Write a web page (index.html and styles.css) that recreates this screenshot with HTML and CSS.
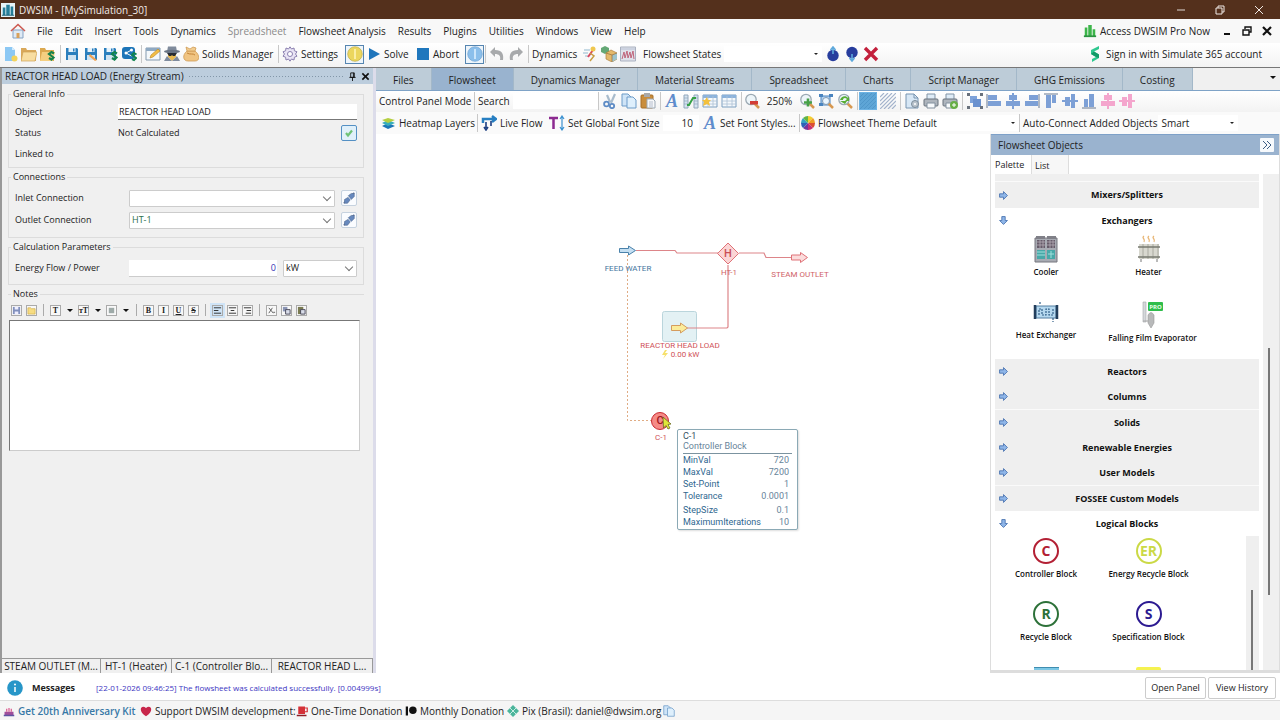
FILE: index.html
```html
<!DOCTYPE html>
<html lang="en">
<head>
<meta charset="utf-8">
<title>DWSIM - [MySimulation_30]</title>
<link rel="stylesheet" href="styles.css">
</head>
<body>
<svg class="sprite" aria-hidden="true">
  <symbol id="new" viewBox="0 0 16 16"><path d="M3 1h7l3 3v11H3z" fill="#8cc8f4"/><path d="M10 1v3h3" fill="#d4ecfc"/><circle cx="12.500" cy="12.500" r="3" fill="#f4d35a"/></symbol>
  <symbol id="open" viewBox="0 0 16 16"><path d="M0 2h5l1 2h9v11H0z" fill="#d9a85a"/><path d="M2 6h14l-2 9H0z" fill="#f8dda0" stroke="#cfa255" stroke-width=".7"/></symbol>
  <symbol id="dollar" viewBox="0 0 16 16"><path d="M12 0v3L7 5.500l5 3V12l-7 4v-3l4-2-5-3V4z" fill="#2fc890"/><path d="m4 8 5 3 3 1V8.500l-5-3z" fill="#139a68"/></symbol>
  <symbol id="opens" viewBox="0 0 16 16"><path d="M0 2h5l1 2h8v11H0z" fill="#dca950"/><path d="M2 6h13l-2 9H0z" fill="#f5cf80"/><path d="M14 7.500 11.500 6 9 8l4.500 3.500-2 2L9 12" fill="none" stroke="#14824c" stroke-width="2.200"/></symbol>
  <symbol id="save" viewBox="0 0 16 16"><path d="M2 2h11l1 1v11H2z" fill="#2b7fbd"/><path d="M4.500 2h7v4h-7z" fill="#e8f3fa"/><path d="M4 9h8v5H4z" fill="#cfe2f0"/><path d="M9 2.500h1.500v3H9z" fill="#2b7fbd"/></symbol>
  <symbol id="saveas" viewBox="0 0 16 16"><use href="#save"/><path d="m7 8 7 6-2 1-6-5z" fill="#f0a04c"/></symbol>
  <symbol id="saves" viewBox="0 0 16 16"><use href="#save"/><path d="M15 7.500 12.500 6 10 8l4.500 3.500-2 2L10 12" fill="none" stroke="#11844f" stroke-width="2.200"/></symbol>
  <symbol id="share" viewBox="0 0 16 16"><rect x="1" y="1" width="13" height="12" rx="3" fill="#1c75b8"/><path d="M10.500 4 5 7l5.500 3" fill="none" stroke="#fff" stroke-width="1"/><circle cx="10.500" cy="4" r="1.500" fill="#fff"/><circle cx="5" cy="7" r="1.500" fill="#fff"/><path d="M15.500 8.500 13 7l-2 2 4 3-2 2-2-1" fill="none" stroke="#11844f" stroke-width="2"/></symbol>
  <symbol id="edit" viewBox="0 0 16 16"><path d="M1 2h14v12H1z" fill="#f4f8fb" stroke="#8399ae"/><path d="M1 2h14v3H1z" fill="#8fa9c2"/><path d="m5 12 1-3 7-6 2 2-7 6z" fill="#f2bd45" stroke="#ba8420" stroke-width=".6"/></symbol>
  <symbol id="spy" viewBox="0 0 16 16"><path d="M4 .5h8l1 5H3z" fill="#808b9c"/><ellipse cx="8" cy="5.500" rx="8" ry="1.700" fill="#697484"/><path d="M4 7h8v4l-4 4-4-4z" fill="#e8b94f"/><path d="M3 7h10l-2 3H9L8 9l-1 1H5z" fill="#272c34"/><path d="m0 15 3-5 5 5 5-5 3 5z" fill="#7f8b9e"/></symbol>
  <symbol id="bag" viewBox="0 0 16 16"><path d="M4 5C-1 9 0 15 5 15h7c5 0 5-6 0-10z" fill="#f0c482" stroke="#cf9c55" stroke-width=".8"/><path d="M4 5 3 1l4 2 3-2 3 1-1 3z" fill="#f2cd90" stroke="#cf9c55" stroke-width=".8"/><path d="M4 7c3 2 6 0 8 2" fill="none" stroke="#c58438"/></symbol>
  <symbol id="gear" viewBox="0 0 16 16"><path d="m8 .8 1.500 2.200L12 2l.4 2.800 2.600 1L13.500 8l1.500 2.200-2.600 1L12 14l-2.500-1L8 15.200 6.500 13 4 14l-.4-2.800-2.600-1L2.500 8 1 5.800l2.600-1L4 2l2.500 1z" fill="#e9e4f5" stroke="#8b80b0"/><circle cx="8" cy="8" r="2.500" fill="#fff" stroke="#8b80b0"/></symbol>
  <symbol id="sol" viewBox="0 0 16 16"><circle cx="8" cy="8" r="7.300" fill="#ebd65d" stroke="#bdae48" stroke-width=".7"/><path d="M8 3v10" stroke="#fff6bc" stroke-width="1.500"/></symbol>
  <symbol id="inf" viewBox="0 0 16 16"><circle cx="8" cy="8" r="7.300" fill="#8bbfeb" stroke="#72a5d2" stroke-width=".7"/><path d="M8 3v10" stroke="#e0f2ff" stroke-width="1.500"/></symbol>
  <symbol id="play" viewBox="0 0 16 16"><path d="m3 2 11 6-11 6z" fill="#1f75bb"/></symbol>
  <symbol id="stop" viewBox="0 0 16 16"><path d="M2 2h12v12H2z" fill="#1f77bd"/></symbol>
  <symbol id="undo" viewBox="0 0 16 16"><path d="m1 6 5-5v3c7 0 9 4 8 10h-3c1-4-1-6-5-6v3z" fill="#a8aaac"/></symbol>
  <symbol id="redo" viewBox="0 0 16 16"><path d="m15 6-5-5v3C3 4 1 8 2 14h3C4 10 6 8 10 8v3z" fill="#a8aaac"/></symbol>
  <symbol id="tune" viewBox="0 0 16 16"><path d="M2 4h6M1 7h5M3 10h4" stroke="#91b8cf"/><path d="m6 11 5-7" stroke="#d94862" stroke-width="2"/><circle cx="11" cy="3" r="2.500" fill="#efc74f"/><path d="m8 7 4 3-4 5" fill="none" stroke="#c79d42" stroke-width="1.500"/></symbol>
  <symbol id="cubes" viewBox="0 0 16 16"><path d="m0 2 4-2 4 2v4L4 8 0 6z" fill="#64a876"/><path d="m5 7 5-3 6 3v6l-5 3-6-3z" fill="#e4b96a" stroke="#ad813d" stroke-width=".7"/><path d="m11 9 5-2v6l-5 3z" fill="#9dc4cc"/><path d="m5 7 6 2v7M11 9l5-2" fill="none" stroke="#9d7744" stroke-width=".8"/></symbol>
  <symbol id="chart" viewBox="0 0 16 16"><path d="M.5 1h15v14H.5z" fill="#dfe2ea" stroke="#aab1c0"/><path d="M2 13 4 6l1 6 2-7 1 7 2-6 1 6 2-7 1 8" fill="none" stroke="#c0647a"/><path d="M1 3h14" stroke="#b9c2d6"/></symbol>
  <symbol id="up" viewBox="0 0 16 16"><circle cx="8" cy="9.500" r="5.700" fill="#273d9d"/><path d="M8 8V1M5.500 4 8 1l2.500 3" fill="none" stroke="#5ea9dc" stroke-width="1.600"/></symbol>
  <symbol id="down" viewBox="0 0 16 16"><circle cx="8" cy="6.500" r="5.700" fill="#273d9d"/><path d="M8 8v7M5.500 12 8 15l2.500-3" fill="none" stroke="#5ea9dc" stroke-width="1.600"/></symbol>
  <symbol id="del" viewBox="0 0 16 16"><path d="m2 2 12 12M14 2 2 14" stroke="#c3203c" stroke-width="3.400"/></symbol>
  <symbol id="cut" viewBox="0 0 16 16"><path d="m9 10 4-9M8 9 5 2" stroke="#a9bccd" stroke-width="2.200"/><circle cx="4.500" cy="11" r="2.400" fill="none" stroke="#5d8bc5" stroke-width="1.800"/><circle cx="10" cy="13" r="2.200" fill="none" stroke="#5d8bc5" stroke-width="1.800"/></symbol>
  <symbol id="copy" viewBox="0 0 16 16"><path d="M1 1h6l3 3v9H1z" fill="#cfe4f7" stroke="#6c9bc8"/><path d="M6 4h6l3 3v8H6z" fill="#deeffc" stroke="#6c9bc8"/></symbol>
  <symbol id="paste" viewBox="0 0 16 16"><rect x="1" y="2" width="12" height="13" rx="1" fill="#c98d3c" stroke="#a76e26"/><path d="M4 0h6v4H4z" fill="#a9a9a9"/><path d="M7 6h6l2 2v7H7z" fill="#f7f8fa" stroke="#9ba8b5"/><path d="M9 9h4M9 11h4M9 13h4" stroke="#99a8ba" stroke-width=".7"/></symbol>
  <symbol id="conn" viewBox="0 0 16 16"><path d="M1 2h4v13H1zM11 2h4v13h-4z" fill="#d5e3f0" stroke="#92a7bb"/><path d="M1 5h4M1 8h4M1 11h4M11 5h4M11 8h4M11 11h4" stroke="#92a7bb" stroke-width=".7"/><path d="M4 12h2l4-7h3" fill="none" stroke="#35a047" stroke-width="2"/></symbol>
  <symbol id="tbl" viewBox="0 0 16 16"><path d="M1 2h14v12H1z" fill="#f5f9fc" stroke="#7d9fc0"/><path d="M1 2h14v3H1z" fill="#8cb3dc"/><path d="M1 8h14M1 11h14M6 3v11M11 3v11" stroke="#adc2d6" stroke-width=".8"/></symbol>
  <symbol id="tbl2" viewBox="0 0 16 16"><use href="#tbl"/><path d="m5 4 1 3h3L7 9l1 4-3-2-4 2 1-4-2-2h3z" fill="#f3c03c"/></symbol>
  <symbol id="lens" viewBox="0 0 16 16"><path d="m10 10 5 5" stroke="#d79850" stroke-width="2.500"/><circle cx="7" cy="6.500" r="5.200" fill="#edf5f9" stroke="#9ba9b3" stroke-width="1.300"/></symbol>
  <symbol id="zout" viewBox="0 0 16 16"><use href="#lens"/><path d="M6 8h8v3.500H6z" fill="#d33d36"/></symbol>
  <symbol id="zin" viewBox="0 0 16 16"><use href="#lens"/><path d="M9 5.500v8M5 9.500h8" stroke="#46a047" stroke-width="2.600"/></symbol>
  <symbol id="zfit" viewBox="0 0 16 16"><path d="M3 3h9v9H3z" fill="#b3d3f2" stroke="#4a84bf"/><path d="M1 1h4v3H1zM11 1h4v3h-4zM1 10h4v3H1z" fill="#4a84bf"/><path d="m10 10 5 5" stroke="#d79850" stroke-width="2.500"/><circle cx="8" cy="8" r="3.500" fill="#eaf6ff" stroke="#8399b0"/></symbol>
  <symbol id="zref" viewBox="0 0 16 16"><use href="#lens"/><path d="M3 7c1-4 6-5 8-2l1-2v5H8l2-2c-2-2-4-1-4 1z" fill="#57ad35"/><path d="M3 8h7L8 11z" fill="#57ad35"/></symbol>
  <symbol id="grid1" viewBox="0 0 16 16"><path d="M0 0h16v16H0z" fill="#5ea5d6"/><path d="m0 4 4-4M0 8l8-8M0 12 12 0M0 16 16 0M4 16 16 4M8 16l8-8M12 16l4-4" stroke="#4c93c7" stroke-width=".8"/></symbol>
  <symbol id="grid2" viewBox="0 0 16 16"><path d="m0 4 4-4M0 8l8-8M0 12 12 0M0 16 16 0M4 16 16 4M8 16l8-8M12 16l4-4" stroke="#a3b3cc" stroke-width="1.200"/></symbol>
  <symbol id="page" viewBox="0 0 16 16"><path d="M2 1h8l4 4v10H2z" fill="#d7e7f5" stroke="#7895b1"/><path d="M10 1v4h4" fill="none" stroke="#7895b1"/><circle cx="11" cy="11" r="3.500" fill="#b9c3cc" stroke="#7b8c9b"/><circle cx="11" cy="11" r="1" fill="#fff"/></symbol>
  <symbol id="print" viewBox="0 0 16 16"><path d="M4 1h8v6H4z" fill="#dfecf7" stroke="#8193a5"/><rect x="1" y="6" width="14" height="7" rx="1" fill="#aeb5bd" stroke="#68737d"/><path d="M4 10h8v5H4z" fill="#f7fafc" stroke="#82909e"/></symbol>
  <symbol id="print2" viewBox="0 0 16 16"><use href="#print"/><circle cx="12" cy="12" r="4" fill="#67ae46"/><path d="M12 10v4M10 12h4" stroke="#fff"/></symbol>
  <symbol id="group" viewBox="0 0 16 16"><path d="M3 3h7v7H3z" fill="#7da2da"/><path d="M6 6h8v8H6z" fill="#6a91cf"/><path d="M0 0h3v3H0zM13 0h3v3h-3zM0 13h3v3H0zM13 13h3v3h-3z" fill="#69717c"/></symbol>
  <symbol id="all" viewBox="0 0 16 16"><path d="M1 1v14" stroke="#697990"/><path d="M2 2h9v5H2zM2 8h13v5H2z" fill="currentColor"/></symbol>
  <symbol id="alc" viewBox="0 0 16 16"><path d="M8 0v16" stroke="currentColor" stroke-width="2"/><path d="M4 2h8v5H4zM1 8h14v5H1z" fill="currentColor"/></symbol>
  <symbol id="alr" viewBox="0 0 16 16"><path d="M15 1v14" stroke="#697990"/><path d="M5 2h9v5H5zM1 8h13v5H1z" fill="currentColor"/></symbol>
  <symbol id="alt" viewBox="0 0 16 16"><path d="M1 1h14" stroke="#697990"/><path d="M3 2h5v13H3zM9 2h4v8H9z" fill="currentColor"/></symbol>
  <symbol id="alm" viewBox="0 0 16 16"><path d="M0 8h16" stroke="currentColor" stroke-width="2"/><path d="M3 4h5v9H3zM9 1h4v14H9z" fill="currentColor"/></symbol>
  <symbol id="alb" viewBox="0 0 16 16"><path d="M1 15h14" stroke="#697990"/><path d="M3 6h4v8H3zM8 1h5v13H8z" fill="currentColor"/></symbol>
  <symbol id="heat" viewBox="0 0 16 16"><path d="m2 11 6-3 7 3-7 3z" fill="#1c76b7"/><path d="m2 8 6-3 7 3-7 3z" fill="#38aebc"/><path d="m2 5 6-2 7 2-7 3z" fill="#b5cf42"/></symbol>
  <symbol id="flow" viewBox="0 0 16 16"><path d="M2 8V4h12M11 1l4 3-4 3" fill="none" stroke="#277fc2" stroke-width="2.500"/><path d="M5 7v6M3 12l2 3 2-3M10 6v5" fill="none" stroke="#1c3f82" stroke-width="1.600"/></symbol>
  <symbol id="tsize" viewBox="0 0 16 16"><path d="M0 3h9M4.500 3v11" stroke="#8c2a90" stroke-width="2.500"/><path d="M13 2v12M11 4l2-3 2 3M11 12l2 3 2-3" fill="none" stroke="#3c92d0" stroke-width="1.200"/></symbol>
  <symbol id="arr" viewBox="0 0 16 16"><path d="M1 5h7V1l7 7-7 7v-4H1z" fill="#8fb6e8" stroke="#456fae" stroke-width="1.500"/></symbol>
  <symbol id="arrd" viewBox="0 0 16 16"><path d="M5 1v7H1l7 7 7-7h-4V1z" fill="#8fb6e8" stroke="#456fae" stroke-width="1.500"/></symbol>
  <symbol id="plug" viewBox="0 0 16 16"><path d="m1 15 4-4M11 5l4-4" stroke="#66799b" stroke-width="2"/><path d="M2 10 7 7l3 3-4 5H2zM7 5l4-3h4v4l-4 4z" fill="#6688bd" stroke="#50698f" stroke-width=".8"/><path d="m6 5 5 6" stroke="#e2ebf6"/></symbol>
</svg>

<header class="title">
  <svg class="app" viewBox="0 0 16 16"><path d="M0 0h16v16H0z" fill="#e7f4f8"/><path d="M2 5h3v9H2zM6 2h4v12H6zM11 4h3v10h-3z" fill="#267e99"/><path d="M1 14h14" stroke="#185a70"/></svg>
  <span>DWSIM - [MySimulation_30]</span>
  <div class="winbtns">
    <button aria-label="Minimize"><svg viewBox="0 0 10 10"><path d="M1 5h8" stroke="#c9bdb6" stroke-width="1.200"/></svg></button>
    <button aria-label="Restore"><svg viewBox="0 0 10 10"><path d="M3 3V1h6v6H7M1 3h6v6H1z" fill="none" stroke="#efe8e4"/></svg></button>
    <button aria-label="Close"><svg viewBox="0 0 10 10"><path d="m1 1 8 8M9 1 1 9" stroke="#efe8e4"/></svg></button>
  </div>
</header>

<nav class="menu">
  <svg class="home" viewBox="0 0 16 16"><path d="M3 7h10v8H3z" fill="#dfeaf5" stroke="#85a2c3"/><path d="M1 8 8 1.500 15 8" fill="none" stroke="#cc5a51" stroke-width="1.600"/><path d="M6.500 10h3v5h-3z" fill="#d8a15a"/></svg>
  <button>File</button><button>Edit</button><button>Insert</button><button>Tools</button><button>Dynamics</button><button class="off">Spreadsheet</button><button>Flowsheet Analysis</button><button>Results</button><button>Plugins</button><button>Utilities</button><button>Windows</button><button>View</button><button>Help</button>
  <button class="pro"><svg viewBox="0 0 16 16"><path d="M2 4h3v10H2zM6 1h4v13H6zM11 6h3v8h-3z" fill="#3cb54a"/><path d="M1 14h14" stroke="#2a9440" stroke-width="2"/></svg>Access DWSIM Pro Now</button>
  <div class="mdi">
    <button aria-label="Minimize document"><svg viewBox="0 0 10 10"><path d="M2 8h6" stroke="#111" stroke-width="2"/></svg></button>
    <button aria-label="Restore document"><svg viewBox="0 0 10 10"><path d="M3 3V1h6v5H7M1 4h6v5H1z" fill="none" stroke="#111" stroke-width="1.400"/></svg></button>
    <button aria-label="Close document"><svg viewBox="0 0 10 10"><path d="m1 1 8 8M9 1 1 9" stroke="#111" stroke-width="2.200"/></svg></button>
  </div>
</nav>

<div class="bar main">
  <div class="grp g-open"><button aria-label="New"><svg><use href="#new"/></svg></button><button aria-label="Open"><svg><use href="#open"/></svg></button><button aria-label="Open from cloud"><svg><use href="#opens"/></svg></button></div>
  <div class="grp g-save"><button aria-label="Save"><svg><use href="#save"/></svg></button><button aria-label="Save as"><svg><use href="#saveas"/></svg></button><button aria-label="Save to cloud"><svg><use href="#saves"/></svg></button><button aria-label="Share"><svg><use href="#share"/></svg></button></div>
  <div class="grp g-solid"><button aria-label="Edit compounds"><svg><use href="#edit"/></svg></button><button aria-label="Inspector"><svg><use href="#spy"/></svg></button><button><svg><use href="#bag"/></svg>Solids Manager</button></div>
  <div class="grp g-set"><button><svg><use href="#gear"/></svg>Settings</button></div>
  <div class="grp g-solve"><button class="on" aria-label="Solver active"><svg><use href="#sol"/></svg></button><button class="solve"><svg><use href="#play"/></svg>Solve</button><button class="abort"><svg><use href="#stop"/></svg>Abort</button><button class="on" aria-label="Simultaneous adjust"><svg><use href="#inf"/></svg></button></div>
  <div class="grp g-undo"><button aria-label="Undo"><svg><use href="#undo"/></svg></button><button aria-label="Redo"><svg><use href="#redo"/></svg></button></div>
  <div class="grp g-dyn"><span class="word">Dynamics</span><button aria-label="Integrator"><svg><use href="#tune"/></svg></button><button aria-label="Dynamics manager"><svg><use href="#cubes"/></svg></button><button aria-label="Charts"><svg><use href="#chart"/></svg></button></div>
  <div class="grp g-state"><label for="st">Flowsheet States</label><span class="pick wide"><select id="st"><option></option></select></span><button aria-label="Save state"><svg><use href="#up"/></svg></button><button aria-label="Load state"><svg><use href="#down"/></svg></button><button aria-label="Delete state"><svg><use href="#del"/></svg></button></div>
  <button class="signin"><svg><use href="#dollar"/></svg>Sign in with Simulate 365 account</button>
</div>

<main>
  <aside class="left">
    <div class="lhead"><h2>REACTOR HEAD LOAD (Energy Stream)</h2><i></i><button aria-label="Pin"><svg viewBox="0 0 10 10"><path d="M3 1h4v5H3zM6 1v5M1.500 6h7M5 6v4" fill="none" stroke="#111"/></svg></button><button aria-label="Close panel"><svg viewBox="0 0 10 10"><path d="m1.500 1.500 7 7M8.500 1.500l-7 7" stroke="#111" stroke-width="1.800"/></svg></button></div>
    <form class="props">
      <fieldset class="f-gen"><legend>General Info</legend>
        <div class="row"><label for="ob">Object</label><input id="ob" class="obj" value="REACTOR HEAD LOAD"></div>
        <div class="row"><span class="lb">Status</span><span class="val">Not Calculated</span><button type="button" class="chk" aria-label="Active"><svg viewBox="0 0 10 10"><path d="m2 5 2 2.500L8 2.500" fill="none" stroke="#6fc277" stroke-width="2.200"/></svg></button></div>
        <div class="row"><span class="lb">Linked to</span></div>
      </fieldset>
      <fieldset class="f-con"><legend>Connections</legend>
        <div class="row"><label for="ic">Inlet Connection</label><span class="sel"><select id="ic"><option></option></select></span><button type="button" class="plug" aria-label="Disconnect inlet"><svg><use href="#plug"/></svg></button></div>
        <div class="row"><label for="oc">Outlet Connection</label><span class="sel green"><select id="oc"><option>HT-1</option></select></span><button type="button" class="plug" aria-label="Disconnect outlet"><svg><use href="#plug"/></svg></button></div>
      </fieldset>
      <fieldset class="f-cal"><legend>Calculation Parameters</legend>
        <div class="row"><label for="en">Energy Flow / Power</label><input id="en" class="num" value="0"><span class="sel unit"><select aria-label="Unit"><option>kW</option></select></span></div>
      </fieldset>
      <fieldset class="f-not"><legend>Notes</legend>
        <div class="rich">
          <button type="button" aria-label="Save notes"><svg viewBox="0 0 10 10"><path d="M1 1h8v8H1z" fill="#8190bd"/><path d="M3 1h4v3H3zM3 6h4v3H3z" fill="#eef"/></svg></button>
          <button type="button" aria-label="Open notes"><svg viewBox="0 0 10 10"><path d="M1 2h3l1 1h4v6H1z" fill="#f6dc82" stroke="#cfa93f" stroke-width=".7"/></svg></button><hr>
          <button type="button">T</button><b class="car"></b><button type="button">тT</button><b class="car"></b><button type="button" aria-label="Colour"><svg viewBox="0 0 10 10"><path d="M2 2h6v6H2z" fill="#9eaaa8"/></svg></button><b class="car"></b><hr>
          <button type="button">B</button><button type="button">I</button><button type="button"><u>U</u></button><button type="button"><s>S</s></button><hr>
          <button type="button" class="cur" aria-label="Left"><svg viewBox="0 0 10 10"><path d="M1 2h8M1 5h5M1 8h8" stroke="#222"/></svg></button><button type="button" aria-label="Center"><svg viewBox="0 0 10 10"><path d="M1 2h8M3 5h4M1 8h8" stroke="#222"/></svg></button><button type="button" aria-label="Right"><svg viewBox="0 0 10 10"><path d="M1 2h8M4 5h5M3 8h6" stroke="#222"/></svg></button><hr>
          <button type="button" aria-label="Cut"><svg viewBox="0 0 10 10"><path d="m2 2 5 6M6 2 2 8M7 7h2" stroke="#555"/></svg></button><button type="button" aria-label="Copy"><svg viewBox="0 0 10 10"><path d="M1 1h5v5H1z" fill="#8b95b5"/><path d="M4 4h5v5H4z" fill="#d9ddea" stroke="#445"/></svg></button><button type="button" aria-label="Paste"><svg viewBox="0 0 10 10"><path d="M1 1h6v8H1z" fill="#7a7b52"/><path d="M4 4h5v5H4z" fill="#d9ddea" stroke="#445"/></svg></button>
        </div>
        <textarea aria-label="Notes"></textarea>
      </fieldset>
    </form>
    <div class="docs"><button class="d1">STEAM OUTLET (M...</button><button class="d2">HT-1 (Heater)</button><button class="d3">C-1 (Controller Blo...</button><button class="d4">REACTOR HEAD L...</button></div>
  </aside>

  <section class="work">
    <div class="tabs"><button>Files</button><button class="act">Flowsheet</button><button>Dynamics Manager</button><button>Material Streams</button><button>Spreadsheet</button><button>Charts</button><button>Script Manager</button><button>GHG Emissions</button><button>Costing</button><b class="car"></b></div>
    <div class="bar first">
      <div class="grp h-mode"><button>Control Panel Mode</button></div>
      <div class="grp h-search"><label for="se">Search</label><input id="se"></div>
      <div class="grp h-clip"><button aria-label="Cut"><svg><use href="#cut"/></svg></button><button aria-label="Copy"><svg><use href="#copy"/></svg></button><button aria-label="Paste"><svg><use href="#paste"/></svg></button></div>
      <div class="grp h-ins"><button aria-label="Text"><svg viewBox="0 0 16 16"><text class="icon-a" x="8" y="14">A</text></svg></button><button aria-label="Property table"><svg><use href="#conn"/></svg></button><button aria-label="Master table"><svg><use href="#tbl2"/></svg></button><button aria-label="Table"><svg><use href="#tbl"/></svg></button></div>
      <div class="grp h-zoom"><button aria-label="Zoom out"><svg><use href="#zout"/></svg></button><span class="pct">250%</span><button aria-label="Zoom in"><svg><use href="#zin"/></svg></button><button aria-label="Fit"><svg><use href="#zfit"/></svg></button><button aria-label="Default zoom"><svg><use href="#zref"/></svg></button></div>
      <div class="grp h-grid"><button class="sel2" aria-label="Grid"><svg><use href="#grid1"/></svg></button><button aria-label="Snap"><svg><use href="#grid2"/></svg></button></div>
      <div class="grp h-print"><button aria-label="Page setup"><svg><use href="#page"/></svg></button><button aria-label="Print"><svg><use href="#print"/></svg></button><button aria-label="Print preview"><svg><use href="#print2"/></svg></button></div>
      <div class="grp h-align"><button aria-label="Multi select"><svg><use href="#group"/></svg></button><button aria-label="Align left"><svg><use href="#all"/></svg></button><button aria-label="Align center"><svg><use href="#alc"/></svg></button><button aria-label="Align right"><svg><use href="#alr"/></svg></button><button aria-label="Align top"><svg><use href="#alt"/></svg></button><button aria-label="Align middle"><svg><use href="#alm"/></svg></button><button aria-label="Align bottom"><svg><use href="#alb"/></svg></button><button class="pink" aria-label="Distribute vertically"><svg><use href="#alc"/></svg></button><button class="pink" aria-label="Distribute horizontally"><svg><use href="#alm"/></svg></button></div>
    </div>
    <div class="bar second">
      <div class="grp k-heat"><button><svg><use href="#heat"/></svg>Heatmap Layers</button></div>
      <div class="grp k-flow"><button><svg><use href="#flow"/></svg>Live Flow</button></div>
      <div class="grp k-size"><label for="fs"><svg><use href="#tsize"/></svg>Set Global Font Size</label><input id="fs" value="10"></div>
      <div class="grp k-font"><button><svg viewBox="0 0 16 16"><text class="icon-a" x="8" y="14">A</text></svg>Set Font Styles...</button></div>
      <div class="grp k-theme"><label for="th"><svg viewBox="0 0 16 16"><path d="M8 8V1a7 7 0 0 1 5 2z" fill="#f2cf2f"/><path d="M8 8l5-5a7 7 0 0 1 2 5z" fill="#ee9f26"/><path d="M8 8h7a7 7 0 0 1-2 5z" fill="#dc5032"/><path d="m8 8 5 5a7 7 0 0 1-5 2z" fill="#c52f75"/><path d="M8 8v7a7 7 0 0 1-5-2z" fill="#75369b"/><path d="m8 8-5 5a7 7 0 0 1-2-5z" fill="#2d62b7"/><path d="M8 8H1a7 7 0 0 1 2-5z" fill="#35a3c2"/><path d="M8 8 3 3a7 7 0 0 1 5-2z" fill="#62b544"/></svg>Flowsheet Theme</label><span class="pick"><select id="th"><option>Default</option></select></span></div>
      <div class="grp k-auto"><label for="ac">Auto-Connect Added Objects</label><span class="pick"><select id="ac"><option>Smart</option></select></span></div>
    </div>
    <div class="stage">
      <div class="canvas">
        <svg class="diagram">
          <g transform="translate(-376 -134)" fill="none">
            <rect x="662.500" y="311.500" width="34" height="30" rx="2" fill="#e3f1f4" stroke="#bad5dc"/>
            <path d="M636 250.500h39l2 2.500h41M739 253h25l2 4.500h26M687 328h40l1-1v-62" stroke="#dd8589" stroke-width="1.200"/>
            <path d="M627.500 255v165.500H651" stroke="#e0ac84" stroke-dasharray="2 2"/>
            <path d="M619.500 248.500h9v-2.500l7 4.500-7 4.500v-2.500h-9z" fill="#c4dff2" stroke="#4a82ab"/>
            <path d="M791.500 255h9v-2.500l7 5-7 5v-2.500h-9z" fill="#fbdcdc" stroke="#df7278"/>
            <path d="M671.500 325.500h9V323l7 5-7 5v-2.500h-9z" fill="#fbec9a" stroke="#d59c5e"/>
            <path d="m728 243 10.500 10.500L728 264l-10.500-10.500z" fill="#fbd5d5" stroke="#df7278"/>
            <circle cx="660" cy="421" r="8.500" fill="#f58a86" stroke="#c92930"/>
            <path d="m665 350-3 5h3l-2 4 5-6h-3l2-3z" fill="#f6e06a"/>
            <g class="dtext">
              <text class="sym" x="728" y="257" fill="#c94f56">H</text>
              <text x="628" y="271" fill="#3f759e">FEED WATER</text>
              <text x="729" y="275" fill="#cf6167">HT-1</text>
              <text x="800" y="277" fill="#cf6167">STEAM OUTLET</text>
              <text x="680" y="348" fill="#cf5157">REACTOR HEAD LOAD</text>
              <text x="685" y="357" fill="#cf5157">0.00 kW</text>
              <text class="sym" x="660" y="424" fill="#a0161c">C</text>
              <text x="661" y="440" fill="#cf5157">C-1</text>
            </g>
            <path d="m663 417 8 7-3 .5 2 3.500-2 1-2-3.500-2.500 2.500z" fill="#dfe739" stroke="#6b6b1d" stroke-width=".8"/>
          </g>
        </svg>
        <div class="tip"><strong>C-1</strong><p>Controller Block</p>
          <dl><dt>MinVal</dt><dd>720</dd><dt>MaxVal</dt><dd>7200</dd><dt>Set-Point</dt><dd>1</dd><dt>Tolerance</dt><dd>0.0001</dd></dl>
          <dl><dt>StepSize</dt><dd>0.1</dd><dt>MaximumIterations</dt><dd>10</dd></dl></div>
      </div>
      <aside class="palette">
        <div class="phead"><h2>Flowsheet Objects</h2><button aria-label="Collapse"><svg viewBox="0 0 10 10"><path d="m1 1 4 4-4 4M5 1l4 4-4 4" fill="none" stroke="#3c5c83"/></svg></button></div>
        <div class="ptabs"><button class="act">Palette</button><button>List</button></div>
        <div class="pbody">
          <div class="plist">
            <div class="cut"></div>
            <button class="cat tall"><svg><use href="#arr"/></svg>Mixers/Splitters</button>
            <button class="cat open"><svg><use href="#arrd"/></svg>Exchangers</button>
            <div class="items">
              <figure><svg viewBox="0 0 26 28"><path d="M2 3h22v24H2z" fill="#a8abb3" stroke="#76777e"/><path d="M3 1h9v3H3zM14 1h9v3h-9z" fill="#808088"/><path d="M4 5h8v8H4zM14 5h8v8h-8z" fill="#665c6a"/><path d="M4 7h8M4 10h8M14 7h8M14 10h8M7 5v8M10 5v8M17 5v8M20 5v8" stroke="#b8adb7" stroke-width=".8"/><path d="M4 15h8v9H4zM14 15h8v9h-8z" fill="#48a8a8"/><path d="M4 17h8M4 20h8M18 16v7M15 19h6" stroke="#9fe0dc"/></svg><figcaption>Cooler</figcaption></figure>
              <figure><svg viewBox="0 0 26 28"><path d="M8 1c-3 2 2 3 0 6M13 1c-3 2 2 3 0 6M18 1c-3 2 2 3 0 6" fill="none" stroke="#e8b676" stroke-width="1.300"/><path d="M3 9h20v15H3z" fill="#d8d8cf"/><path d="M7 9v15M12 9v15M17 9v15M22 9v15" stroke="#aaaaa0"/><path d="M2 12h22M2 22h22" stroke="#777970" stroke-width="1.500"/><path d="M5 24v3M21 24v3" stroke="#777"/></svg><figcaption>Heater</figcaption></figure>
              <figure><svg viewBox="0 0 26 28"><path d="M3 8h20v12H3z" fill="#b5d8ef" stroke="#537fa2"/><path d="M2 7v14M24 7v14" stroke="#223e5c" stroke-width="2.500"/><path d="M6 17V11h3v6h4v-6h3v6h4v-6M7 6V4M20 20v4" fill="none" stroke="#315f88" stroke-width="1.200" stroke-dasharray="2 1"/></svg><figcaption>Heat Exchanger</figcaption></figure>
              <figure class="low"><svg viewBox="0 0 26 28"><path d="M3 1h3v20H3z" fill="#d5d8db" stroke="#a5a8ac" stroke-width=".6"/><path d="M3 20h6" stroke="#aaa"/><path d="M8 14q3-5 6 0v8l-3 5-3-5z" fill="#b8b9ba" stroke="#999" stroke-width=".6"/><rect x="8" y="1" width="15" height="9" rx="1" fill="#2ebd4b"/><text x="15.500" y="8" text-anchor="middle" font-size="6" font-weight="700" fill="#eaffed">PRO</text></svg><figcaption>Falling Film Evaporator</figcaption></figure>
            </div>
            <button class="cat"><svg><use href="#arr"/></svg>Reactors</button>
            <button class="cat"><svg><use href="#arr"/></svg>Columns</button>
            <button class="cat line"><svg><use href="#arr"/></svg>Solids</button>
            <button class="cat"><svg><use href="#arr"/></svg>Renewable Energies</button>
            <button class="cat"><svg><use href="#arr"/></svg>User Models</button>
            <button class="cat line"><svg><use href="#arr"/></svg>FOSSEE Custom Models</button>
            <button class="cat open"><svg><use href="#arrd"/></svg>Logical Blocks</button>
            <div class="items logic">
              <figure><span class="ring red">C</span><figcaption>Controller Block</figcaption></figure>
              <figure><span class="ring lime">ER</span><figcaption>Energy Recycle Block</figcaption></figure>
              <figure><span class="ring green">R</span><figcaption>Recycle Block</figcaption></figure>
              <figure><span class="ring navy">S</span><figcaption>Specification Block</figcaption></figure>
              <figure><span class="box blue"></span></figure>
              <figure><span class="box yel"></span></figure>
              <i class="inner"></i>
            </div>
          </div>
          <div class="track"><i></i></div>
        </div>
      </aside>
    </div>
  </section>
</main>

<section class="msgs"><svg viewBox="0 0 16 16"><circle cx="8" cy="8" r="7.800" fill="#2796c8"/><circle cx="8" cy="4.500" r="1" fill="#fff"/><path d="M8 7v5" stroke="#fff" stroke-width="1.500"/></svg><h2>Messages</h2><p>[22-01-2026 09:46:25] The flowsheet was calculated successfully. [0.004999s]</p><button class="b1">Open Panel</button><button class="b2">View History</button></section>

<footer>
  <a href="#kit" class="s1"><svg viewBox="0 0 16 16"><path d="M2 9h12v5H2z" fill="#a04e9a"/><path d="M5 5v4M8 4v5M11 5v4" stroke="#d94d86" stroke-width="1.500"/><path d="M1 14h14" stroke="#5d53a0" stroke-width="2"/></svg>Get 20th Anniversary Kit</a>
  <span class="s2"><svg viewBox="0 0 16 16"><path d="M8 15C-4 7 2-1 8 4c6-5 12 3 0 11z" fill="#c8274b"/></svg>Support DWSIM development:</span>
  <a href="#once" class="s3"><svg viewBox="0 0 16 16"><path d="M3 2h9v10H3z" fill="#d43037"/><path d="M12 4h3v5h-3" fill="none" stroke="#d43037" stroke-width="1.600"/><path d="M1 13h13v2H1z" fill="#8d1d25"/></svg>One-Time Donation</a>
  <a href="#month" class="s4"><svg viewBox="0 0 16 16"><path d="M1 2h3v12H1z" fill="#111"/><circle cx="10.500" cy="7" r="5" fill="#111"/></svg>Monthly Donation</a>
  <span class="s5"><svg viewBox="0 0 16 16"><path d="m8 0 8 8-8 8-8-8z" fill="#4bb59b"/><path d="m4 4 8 8M12 4l-8 8" stroke="#d8f3ec" stroke-width="1.200"/></svg>Pix (Brasil): daniel@dwsim.org</span>
  <button aria-label="Copy address"><svg><use href="#copy"/></svg></button>
</footer>
</body>
</html>
```

FILE: styles.css
```css
* { box-sizing: border-box; }
body {
  margin: 0; height: 100vh; overflow: hidden;
  display: grid; grid-template-rows: 19px 24px 25px minmax(0, 1fr) 28px 19px;
  font: 10px/14px "Open Sans", "Noto Sans", sans-serif; color: #222; background: #fff;
}
button, input, select, textarea { font: inherit; color: inherit; margin: 0; padding: 0; border: 0; background: none; border-radius: 0; outline: 0; }
button { display: inline-flex; align-items: center; white-space: nowrap; flex: none; }
label { white-space: nowrap; }
h2 { margin: 0; font-size: inherit; font-weight: 400; }
p { margin: 0; }
.sprite { position: absolute; width: 0; height: 0; }
.icon-a { font: italic 700 18px "Liberation Serif", serif; fill: #5f8ccc; text-anchor: middle; }
select { appearance: none; }

.title { display: flex; align-items: center; gap: 4px; padding-left: 1px; background: #54301c; color: #f2ece8; }
.app { width: 14px; height: 14px; }
.winbtns { margin-left: auto; display: flex; gap: 29px; padding-right: 16px; }
.winbtns svg { width: 10px; height: 10px; display: block; }

.menu { display: flex; align-items: center; gap: 12px; background: #f8f8f8; padding-left: 10px; }
.home { width: 16px; height: 16px; margin-right: -1px; }
.menu .off { color: #8a8a8a; }
.menu .pro { margin-left: auto; gap: 3px; }
.pro svg { width: 14px; height: 14px; }
.mdi { display: flex; gap: 10px; padding-right: 8px; }
.mdi svg { width: 10px; height: 10px; display: block; }

.bar { display: flex; align-items: center; background: linear-gradient(#fff, #f3f3f3); white-space: nowrap; }
.bar svg { width: 16px; height: 16px; flex: none; overflow: visible; }
.bar button, .bar label { display: inline-flex; align-items: center; gap: 3px; }
.grp { display: flex; align-items: center; gap: 3px; flex: none; height: 18px; }
.grp + .grp { border-left: 1px solid #c8c8c8; padding-left: 3px; }
.main { border-bottom: 1px solid #777; padding: 0 0 2px 2px; }
.g-open { width: 58px; }
.g-save { width: 81px; }
.g-solid { width: 137px; }
.g-set { width: 67px; }
.grp.g-solve { width: 140px; gap: 2px; border: 0; padding: 0; }
.g-solve .on { width: 19px; height: 19px; border: 1px solid #5686b1; justify-content: center; background: #eef5fb; }
.bar .solve, .bar .abort { gap: 2px; }
.solve { width: 47px; }
.abort { width: 48px; }
.g-undo { width: 43px; padding-left: 3px; }
.g-dyn { width: 109px; }
.g-dyn .word { width: 47px; }
.grp.g-state { border: 0; padding-left: 6px; gap: 3px; }
.pick { position: relative; display: block; }
.pick select { width: 100%; height: 16px; background: #fff; padding-left: 3px; display: block; }
.pick::after { content: ""; position: absolute; right: 4px; top: 7px; border: 2px solid transparent; border-top-color: #222; pointer-events: none; }
.pick.wide { width: 98px; }
.signin { margin-left: auto; margin-right: 18px; }

main { display: grid; grid-template-columns: 376px minmax(0, 1fr); min-height: 0; }
.left { display: flex; flex-direction: column; background: #f0f0f0; border-left: 2px solid #999; border-right: 3px solid #dcdcea; min-height: 0; }
.lhead { display: flex; align-items: center; gap: 4px; height: 16px; padding: 0 3px; background: #bccddd; flex: none; }
.lhead i { flex: 1; height: 3px; background: radial-gradient(circle, #8296a8 0 1px, transparent 1px) 0 0 / 3px 3px; }
.lhead svg { width: 9px; height: 9px; }
.props { flex: 1; padding: 4px 9px 0 6px; font-size: 9px; line-height: 12px; min-height: 0; }
fieldset { margin: 0 0 3px; min-width: 0; padding: 0 6px; border: 1px solid #dcdcdc; }
legend { padding: 0 2px; margin-left: -4px; height: 12px; }
.f-gen { height: 80px; }
.f-con { height: 67px; }
.f-cal { height: 44px; }
.f-not { border-width: 1px 0 0; padding: 0 1px; }
.f-not legend { margin-left: 2px; }
.row { display: flex; align-items: center; height: 22px; }
.f-gen .row { height: 21px; }
.f-gen .row:first-of-type { margin-top: 1px; }
.f-con .row:first-of-type, .f-cal .row { margin-top: 4px; }
.row label, .row .lb { flex: none; width: 114px; }
.f-gen .row label, .f-gen .row .lb { width: 103px; }
.row .obj { flex: 1; height: 16px; background: #fff; border-bottom: 1px solid #777; padding-left: 1px; min-width: 0; }
.row .val { flex: 1; }
.chk { width: 16px; height: 16px; border: 1px solid #5490c4; border-radius: 2px; background: #e0f0fa; justify-content: center; }
.chk svg { width: 10px; height: 10px; }
.sel { position: relative; flex: 1; display: block; }
.sel select { width: 100%; height: 17px; display: block; border: 1px solid #ccc; border-radius: 1px; background: #fff; padding-left: 2px; }
.sel::after { content: ""; position: absolute; right: 5px; top: 4px; width: 5px; height: 5px; border: solid #777; border-width: 0 1px 1px 0; transform: rotate(45deg); pointer-events: none; }
.sel.green select { color: #2c6e4a; }
.plug { width: 16px; height: 16px; margin-left: 6px; border: 1px solid #c6d2df; border-radius: 2px; background: #fafcff; justify-content: center; }
.plug svg { width: 12px; height: 12px; }
.num { flex: 1; height: 17px; min-width: 0; background: #fff; border-bottom: 1px solid #ccc; text-align: right; color: #3434b4; padding-right: 1px; }
.unit { flex: none; width: 74px; margin-left: 6px; }
.rich { display: flex; align-items: center; gap: 4px; height: 20px; padding-left: 2px; }
.rich button { width: 11px; height: 11px; border: 1px solid #aaa; justify-content: center; background: #f8f8f8; font: 700 8px/9px "Liberation Serif", serif; }
.rich svg { width: 9px; height: 9px; flex: none; }
.rich .cur { background: #cfe4f7; outline: 2px solid #cfe4f7; }
.rich hr { width: 1px; height: 12px; margin: 0 2px; border: 0; background: #aaa; }
.car { display: block; border: 3px solid transparent; border-top-color: #111; border-bottom: 0; }
.rich .car { margin: 0 1px 0 2px; }
textarea { display: block; width: 351px; max-width: 100%; height: 131px; resize: none; background: #fff; border: 1px solid #ccc; border-top: 1px solid #777; border-left-color: #777; }
.docs { display: flex; flex: none; height: 15px; border-top: 1px solid #999; }
.docs button { border-right: 1px solid #999; justify-content: center; height: 14px; line-height: 14px; }
.d1 { width: 99px; }
.d2 { width: 71px; }
.d3 { width: 100px; }
.docs .d4 { flex: 1; }

.work { display: grid; grid-template-rows: 23px 21px 22px minmax(0, 1fr); min-width: 0; min-height: 0; }
.tabs { display: flex; align-items: stretch; background: #f0f0f0; border-bottom: 1px solid #7fa3c7; }
.tabs button { padding: 2px 17px 0; background: #bdccd8; border-right: 1px solid #a3b8c9; }
.tabs .act { background: #99b3cf; }
.tabs .car { margin: 8px 4px 0 auto; }
.first { padding-bottom: 2px; }
.h-mode { width: 98px; padding-left: 3px; }
.h-search { width: 124px; }
.h-search input { flex: 1; min-width: 0; height: 16px; background: #fff; }
.h-clip { width: 62px; }
.h-align { color: #7da0d6; }
.h-ins { width: 81px; }
.h-zoom { width: 116px; }
.grp.h-zoom { padding-left: 2px; }
.h-zoom .pct { width: 33px; text-align: center; }
.h-grid { width: 43px; }
.grp.h-grid { padding-left: 1px; }
.sel2 { background: #6db3e4; padding: 1px; }
.h-print { width: 62px; }
.grp.h-align { padding-left: 4px; }
.pink { color: #f4a6cd; }
.second { background: #fafafa; }
.k-heat { width: 101px; padding-left: 4px; }
.k-flow { width: 69px; }
.grp.k-size { width: 153px; border: 0; }
.k-size input { flex: 1; min-width: 0; height: 16px; background: #fff; text-align: right; padding-right: 6px; }
.grp.k-font { width: 100px; border: 0; padding-left: 3px; }
.grp.k-theme { width: 220px; gap: 0; padding-left: 0; }
.bar .k-theme label, .bar .k-font button { gap: 2px; }
.k-theme .pick { flex: 1; }
.grp.k-auto { gap: 1px; }
.k-auto .pick { width: 80px; }

.stage { display: grid; grid-template-columns: minmax(0, 1fr) 290px; min-height: 0; }
.canvas { position: relative; background: #fff; overflow: hidden; }
.diagram { width: 100%; height: 100%; display: block; }
.dtext { font: 8px Roboto, "Open Sans", sans-serif; text-anchor: middle; }
.sym { font-size: 11px; font-weight: 500; }
.tip { position: absolute; left: 301px; top: 295px; width: 121px; padding: 2px 5px 0; border: 1px solid #8ba9b5; border-radius: 2px; background: #fff; box-shadow: 1px 1px 2px #ddd; font: 9px/10px Roboto, "Open Sans", sans-serif; color: #67849a; height: 101px; }
.tip strong { display: block; font-weight: 400; color: #344f60; line-height: 9px; }
.tip p { border-bottom: 1px solid #7b93a0; padding-bottom: 2px; }
.tip dl { display: grid; grid-template-columns: 1fr auto; margin: 0 3px 2px 0; line-height: 12px; }
.tip dt { color: #2f678f; }
.tip dd { margin: 0; text-align: right; }

.palette { display: grid; grid-template-rows: 21px 19px minmax(0, 1fr); border: 1px solid #ddd; border-width: 0 1px 3px; background: #fff; min-height: 0; }
.phead { display: flex; align-items: center; justify-content: space-between; padding: 0 5px 0 7px; background: #9ab3cf; border-top: 1px solid #7ea1c8; }
.phead button { width: 14px; height: 14px; background: #f6f9fc; justify-content: center; border-radius: 1px; }
.phead svg { width: 10px; height: 10px; }
.ptabs { display: flex; font-size: 9px; }
.ptabs button { padding: 2px 3px 0; width: 37px; border-right: 1px solid #ddd; background: #f7f7f7; }
.ptabs .act { width: 41px; padding: 0 4px; background: #fff; }
.pbody { display: grid; grid-template-columns: minmax(0, 1fr) 16px; gap: 4px; padding-left: 4px; min-height: 0; }
.plist { overflow: hidden; min-height: 0; display: flex; flex-direction: column; }
.cut { flex: none; height: 8px; background: #efefef; border-bottom: 1px solid #fafafa; }
.cat { position: relative; flex: none; height: 25px; justify-content: center; background: #efefef; font-weight: 700; font-size: 9px; color: #111; }
.cat svg { position: absolute; left: 4px; width: 9px; height: 9px; }
.cat.tall, .cat.line { height: 26px; }
.cat.line { border-top: 1px solid #fafafa; }
.cat.open { background: #fff; }
.items { flex: none; height: 126px; display: grid; grid-template-columns: 102px 103px; grid-auto-rows: 63px; align-content: start; font-size: 8px; line-height: 10px; font-weight: 600; color: #111; position: relative; }
.logic { flex: 1 0 0; overflow: hidden; }
figure { margin: 0; padding-top: 2px; display: flex; flex-direction: column; align-items: center; gap: 4px; white-space: nowrap; }
figure svg { width: 26px; height: 28px; }
.low { padding: 5px 0 0 8px; }
.ring { width: 26px; height: 26px; border: 2px solid; border-radius: 50%; display: flex; align-items: center; justify-content: center; font-size: 14px; font-weight: 700; }
.logic figure { gap: 5px; }
.red { color: #b32034; }
.lime { color: #cbd946; }
.ring.green { color: #2d7139; }
.navy { color: #2c1a91; }
.box { width: 25px; height: 20px; margin-top: 3px; }
.blue { background: #7cc8e6; border-top: 1px solid #3f8db0; }
.yel { background: #f5f250; border-radius: 2px; }
.inner { position: absolute; right: 0; top: 0; bottom: 0; width: 13px; background: linear-gradient(#777, #777) 5px 54px / 2px 100% no-repeat #efefef; }
.track { background: #f0f0f0; }
.track i { display: block; width: 2px; height: 247px; margin: 174px 0 0 5px; background: #777; }

.msgs { display: flex; align-items: center; border-bottom: 1px solid #ddd; padding: 2px 4px 0 7px; background: #fff; }
.msgs svg { width: 16px; height: 16px; margin-right: 9px; }
.msgs h2 { width: 64px; font-weight: 700; font-size: 9px; }
.msgs p { flex: 1; font-size: 8px; color: #3c35c2; }
.msgs button { height: 22px; border: 1px solid #ccc; border-radius: 2px; justify-content: center; font-size: 9px; }
.b1 { width: 61px; margin-right: 2px; }
.b2 { width: 68px; }

footer { display: flex; align-items: center; padding-left: 3px; background: #f5f5f5; white-space: nowrap; }
footer a, footer span { display: flex; align-items: center; gap: 3px; color: inherit; text-decoration: none; flex: none; }
footer svg { width: 12px; height: 12px; flex: none; }
footer .s1 { width: 137px; color: #3778a6; font-weight: 600; }
.s2 { width: 156px; }
.s3 { width: 109px; }
.s4 { width: 102px; }
.s5 { width: 156px; }
```
